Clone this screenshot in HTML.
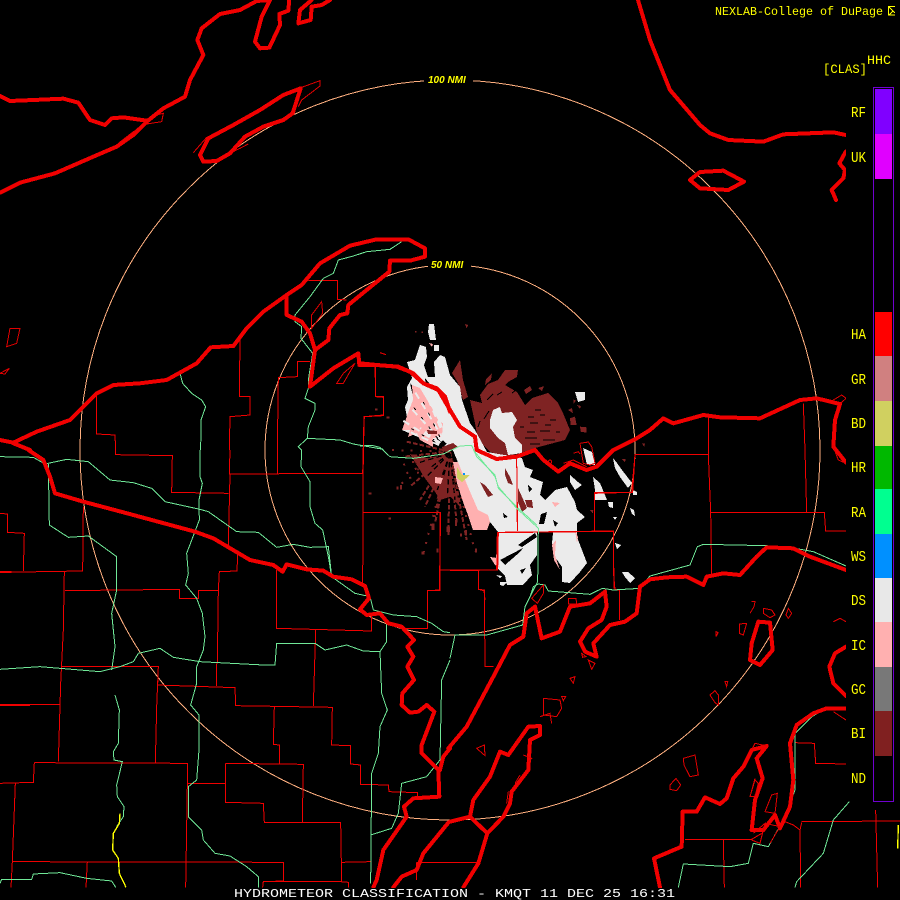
<!DOCTYPE html>
<html><head><meta charset="utf-8"><title>Hydrometeor Classification KMQT</title>
<style>html,body{margin:0;padding:0;background:#000;width:900px;height:900px;overflow:hidden}svg{display:block}
.mono{font-family:"Liberation Mono",monospace;fill:#ff0}
.nmi{font-family:"Liberation Sans",sans-serif;font-weight:bold;font-style:italic;font-size:10px;fill:#ff0}
.t{fill:none;stroke:#f00000;stroke-width:12;stroke-linejoin:round;stroke-linecap:round}
.c{fill:none;stroke:#f00000;stroke-width:3}
.g{fill:none;stroke:#70e898;stroke-width:3}
.i{fill:none;stroke:#e00000;stroke-width:3}
.y{fill:none;stroke:#ff0;stroke-width:4}
</style></head><body>
<svg xmlns="http://www.w3.org/2000/svg" width="900" height="900" viewBox="0 0 900 900" shape-rendering="crispEdges">
<defs><clipPath id="m"><path d="M0 0H846V800H900V888H0Z"/></clipPath></defs>
<rect width="900" height="900" fill="#000"/>

<!-- radar: spokes and clutter -->
<g transform="translate(360 310) scale(.33333)">
 <g fill="none" stroke="#7f2323" stroke-width="6">
  <path stroke-dasharray="14 6" d="M270 425L130 440M270 425L150 530M270 425L180 570M270 425L195 590M270 425L230 590M270 425L225 640M270 425L265 675M270 425L290 640M270 425L320 690M270 425L140 395"/>
  <path stroke-dasharray="6 22" d="M270 425L110 470M270 425L110 530M270 425L345 725M270 425L215 660M270 425L80 420M270 425L120 500M270 425L190 730"/>
  <path stroke-dasharray="4 8" d="M270 425L230 480M270 425L250 530M270 425L280 560M270 425L170 480M270 425L200 520"/>
 </g>
 <path fill="#7f2323" d="M150 432L205 445L255 432L270 460L282 515L300 590L272 560L240 570L225 545L195 505L170 465Z"/>
 <path fill="none" stroke="#000" stroke-width="4" stroke-dasharray="16 10" d="M270 430L170 460M270 430L200 500M270 430L232 540M270 430L262 560M270 430L285 570M270 430L215 470M270 430L250 500M270 430L180 440"/>
 <path fill="#7f2323" d="M315 42L325 45L320 55ZM85 622h8v6h-8zM25 548h9v6h-9zM215 640h8v20h-8zM185 725h8v8h-8zM230 715h6v12h-6zM260 650h10v16h-10zM285 630h6v18h-6zM345 715h6v12h-6zM315 660h6v16h-6zM300 670h6v10h-6zM120 525h6v14h-6zM110 530h6v8h-6zM45 295h8v6h-8zM80 320h8v5h-8zM165 63h4v4h-4zM185 65h4v4h-4zM630 325L645 320L650 345L632 345ZM660 350L680 352L680 368L662 365ZM640 268L648 272L640 282ZM590 295L600 298L595 310ZM690 600L700 600L698 610ZM450 815L462 818L458 825ZM785 447L797 447L795 457ZM845 400L855 400L853 410Z"/>
</g>

<!-- radar: BI echo -->
<path fill="#7f2323" d="M482 403L470 400L475 423L478 440L490 452L508 457L535 448L565 440L570 430L563 413L558 403L548 393L532 398L525 405L517 392L505 385L498 380L488 384L480 395Z"/>
<path fill="#7f2323" d="M498 380L505 370L518 370L517 377L508 382L502 388ZM486 379L492 373L491 380L485 385ZM452 373L460 360L463 380L468 397L463 400L458 383ZM572 418L575 420L573 425ZM568 410l4-2l1 5zM577 405l4 1l-1 3zM524 390l6-4l2 4l-6 4zM538 388l6-2l-2 5z"/>
<path fill="none" stroke="#000" stroke-width="1" d="M528 417h6M540 415h5M530 423h8M545 425h6M527 432h8M540 431h10M525 438h12M543 440h12M530 444h10M545 447h14M535 410h6M520 427h4M484 419l5-8M487 400l6-6M478 427l2-6M497 395l5-3M512 393l4-3M550 420h6M556 432h4"/>

<!-- radar: DS -->
<path fill="#ebebeb" d="M420 345L426 347L427 357L424 365L428 377L435 377L434 362L440 355L445 357L450 375L460 387L462 400L470 423L475 430L487 452L522 458L525 467L533 470L530 477L543 482L540 495L545 500L555 490L567 487L575 502L577 510L585 517L577 523L577 537L582 550L587 563L580 572L570 583L562 582L562 567L555 557L552 543L553 533L552 532L498 532L490 522L488 515L478 510L467 487L457 460L452 448L440 438L425 440L402 430L407 417L405 407L408 400L407 387L412 378L407 362L415 360Z"/>
<path fill="#ebebeb" d="M429 324L434 324L436 340L430 340L428 332ZM434 345h5v6h-5zM493 410L500 407L502 413L512 412L517 420L513 427L515 438L522 445L522 453L508 455L505 443L498 438L490 428L490 420ZM498 532L537 532L537 555L530 565L532 575L523 585L507 585L505 576L497 568L496 558ZM570 475L578 482L582 485L575 490L570 482ZM593 477L600 483L605 495L607 500L595 500L595 490ZM613 458L617 463L622 470L632 483L628 488L620 477L615 468ZM608 502L613 502L613 508L609 507ZM613 517L617 517L615 520ZM630 508l4 2l1 6l-3-2zM615 543L621 545L617 549ZM622 572L628 572L635 578L630 583L625 577ZM583 448L592 452L595 465L587 465ZM500 582L507 582L503 586L500 585ZM496 575L502 576L500 578ZM575 392L585 392L585 400L578 402ZM633 490l4 2v3h-4z"/>

<!-- radar: holes -->
<path fill="#7f2323" d="M480 482L485 485L493 495L488 497L483 488ZM505 468L510 477L513 485L508 483L505 475ZM518 488L527 508L522 512L518 502ZM525 500L532 500L533 508L527 507Z"/>
<path fill="#000" d="M541 514L547 512L544 524L539 524ZM553 520L558 523L555 527ZM503 513L508 517L504 518ZM427 423L442 423L442 435L428 433ZM410 383l5 6l-2 8zM425 378l4 5l-3 4zM417 405l4 3l-3 4zM413 425l6-2l-1 3zM528 485l4 4l-3 3zM535 533L518 545L522 547L537 537ZM500 560L523 548L520 552L505 565ZM520 570l6-2l-4 6z"/>
<!-- radar: IC -->
<path fill="#ffb0b0" d="M412 385L420 388L432 408L438 420L428 430L402 430L408 413L413 400ZM417 410L427 410L433 420L443 423L442 437L433 438L433 447L420 440L417 433L408 437ZM453 462L458 462L468 487L478 510L488 515L490 522L487 530L473 530L468 515L463 502L457 483ZM552 545L556 540L555 555L560 570L554 560ZM575 530L578 537L577 543ZM552 502L560 503L555 507ZM490 557L497 558L498 563L500 568L495 565ZM435 477L443 478L441 484L435 483ZM429 343l4 1l-1 3zM437 424l-4-8l5 3z"/>
<path fill="none" stroke="#ebebeb" stroke-width="2" stroke-dasharray="7 5" d="M450 450L402 420M450 450L408 405M450 450L415 392M450 450L425 392M450 450L410 432M450 450L432 400M450 450L420 428"/>
<path fill="none" stroke="#000" stroke-width="1" stroke-dasharray="3 9" d="M445 448L405 425M445 448L412 405M445 448L420 395"/>
<path fill="#7f2323" d="M442 447L453 443L458 447L443 452ZM427 430l10 1v3h-9z"/>
<path fill="#d0d060" d="M457 467L462 475L470 475L462 482L457 478Z"/>
<path fill="#0090ff" d="M463 473h2v2h-2z"/>

<g clip-path="url(#m)">
<!-- rings -->
<circle cx="450" cy="450" r="370" fill="none" stroke="#ffb080" stroke-width="1"/>
<circle cx="450" cy="450" r="185" fill="none" stroke="#ffb080" stroke-width="1"/>

<!-- top-left -->
<g transform="scale(.33333)">
 <path class="c" d="M720 1020L718 1190L750 1190L750 1245L690 1250L688 1350M290 1185L290 1302L345 1305L347 1350M925 842L1012 842L1012 898L1040 900M930 1085L892 1085L892 1130L835 1133L832 1350M1127 1100L1127 1190L1150 1190L1150 1245L1093 1250L1090 1350"/>
 <path class="g" d="M540 1120L548 1150L575 1180L605 1200L617 1220L603 1260L602 1350M1205 725L1170 748L1100 755L1060 768L1015 780L1000 820L970 835L930 890L885 945L885 965L905 980L903 1015L938 1060L925 1140L925 1165L915 1195L945 1210L945 1230L925 1280L922 1315L895 1340L905 1350M922 1315L1020 1320L1060 1332L1150 1348"/>
 <path class="t" d="M0 578L60 548L165 520L280 470L350 440L400 405L440 365L490 325L555 290L570 240L610 165L592 120L605 85L660 42L720 30L770 3L810 0L785 50L765 125L780 145L808 143L840 75L838 42L865 32L868 -5"/>
 <path class="t" d="M990 0L965 15L935 20L932 60L895 70L900 30L935 0"/>
 <path class="t" d="M0 288L30 303L100 300L190 296L235 308L270 360L315 375L335 355L370 352L440 362"/>
 <path class="t" d="M600 465L625 415L700 375L780 330L850 285L902 265L878 340L850 360L790 380L735 410L690 460L650 483L610 485Z"/>
 <path class="t" d="M0 1320L40 1328L110 1295L210 1260L290 1180L340 1155L420 1150L500 1140L590 1090L632 1042L700 1038L740 985L790 935L860 885L905 855L960 790L1050 737L1130 718L1225 718L1275 745L1275 770L1230 782L1170 782L1168 815L1100 870L1045 915L1042 940L1020 945L988 985L985 1020L945 1050L930 1000L905 965L860 945L860 890"/>
 <path class="t" d="M945 1050L930 1160L1000 1105L1075 1060L1078 1095L1130 1095L1195 1100L1240 1120L1270 1150L1310 1165L1335 1190L1350 1235"/>
 <path class="t" d="M40 1330L90 1350"/>
 <path class="i" d="M580 458L620 412M905 262L960 242L960 258L905 300L895 320M700 455L745 432L720 445M20 1040L30 985L60 985L50 1030ZM0 1120L28 1105L15 1122ZM1010 1150L1030 1120L1065 1090L1050 1115L1030 1150ZM935 945L965 905L968 940L935 985ZM440 372L485 365L490 340L470 345M355 430L400 395L410 390"/>
</g>

<!-- bottom-left -->
<g transform="translate(0 450) scale(.33333)">
 <path class="c" d="M347 0L347 14L517 17L515 127L685 130M690 0L688 72L1090 70M1090 0L1088 405M832 0L832 70M690 72L685 285M713 315L711 363L658 365L655 422L595 422L595 445L538 445L538 418L195 422M250 170L248 363L0 367M193 365L190 540L182 700L175 935M0 190L22 192L22 247L73 250L70 363M0 765L178 763M185 650L475 650L470 770L466 940M475 650L473 705L705 713L707 767L997 772L995 885L1052 887L1052 942L1082 945L1082 1003L1165 1005L1167 1025L1253 1028L1253 1040M650 640L650 708M655 422L652 640M830 360L830 535L1115 543L1115 495M947 540L940 768M823 770L820 883L838 885L838 940M103 938L563 940L557 1312M103 938L100 997L0 1000M46 1000L37 1235L33 1312M37 1235L850 1237L850 1293L790 1295L788 1312M563 1000L677 1000M677 940L910 943L907 1117M677 940L677 1057L790 1060L793 1117L1022 1118L1025 1295L790 1295M1022 1295L1045 1297L1045 1312M1025 1237L1112 1235M262 1235L258 1312M1250 1237L1350 1237M1250 1237L1250 1290M1090 187L1322 187L1318 420L1283 422L1283 535L1200 535M1320 360L1350 360"/>
 <path class="g" d="M0 20L100 22L135 42L200 28L265 35L330 90L400 98L455 115L495 155L600 178L625 185L710 245L775 247L830 292L880 283L930 292L985 290L995 380L1065 430L1110 440L1120 480L1180 495L1250 500L1295 520L1330 545L1350 548M145 42L148 225L205 262L265 258L350 320L350 420L335 490L345 590L335 660M0 658L120 650L300 665L360 650L400 635L415 610L480 595L520 622L600 635L790 645L825 645L830 580L945 580L975 600L1040 585L1090 603L1140 605L1160 575L1160 520M1140 605L1145 730L1162 780L1140 830L1135 910L1115 970L1112 1300M1112 1155L1175 1135L1195 1090L1205 1000L1280 980L1320 930L1325 690L1350 630M600 0L600 80L607 100L597 150L598 210L560 310L565 370L557 405L590 445L607 490L615 560L610 600L590 650L590 700L572 765L597 795L597 900L590 990L565 1010L565 1100L605 1140L610 1170L645 1210L690 1218L740 1250L775 1280L775 1312M905 0L903 50L930 95L930 170L945 220L968 240L985 320L995 380M345 735L358 780L355 880L340 905L342 930L367 935L350 1005L352 1040L372 1070L370 1100L350 1130M0 1300L5 1288L95 1288L100 1272L180 1268L260 1285L335 1293L347 1312"/>
 <path class="y" d="M360 1090L358 1120L340 1150L338 1200L355 1225L358 1270L378 1312"/>
 <path class="t" d="M85 0L130 30L150 80L165 130L250 155L400 195L585 245L640 265L750 330L820 345L848 365L860 343L920 358L970 362L1000 380L1055 388L1095 408L1107 445L1080 478L1100 495L1140 490L1165 520L1205 530L1242 570L1222 590L1240 620L1222 650L1242 690L1207 730L1205 765L1230 788L1255 785L1280 765L1303 785L1265 885L1265 910L1315 960L1318 1040L1240 1045L1212 1070L1220 1100L1150 1200L1130 1290L1120 1312"/>
 <path class="t" d="M1180 1312L1205 1280L1250 1260L1270 1210L1345 1118"/>
 <path class="t" d="M1350 895L1330 920L1320 960"/>
 <path d="M0 366H35M0 765H90" fill="none" stroke="#f00000" stroke-width="5"/>
</g>

<!-- center -->
<g transform="translate(360 310) scale(.33333)">
 <path class="g" d="M0 408L35 406L60 412L90 440L160 445L250 432L300 408L335 406L350 440L405 495L415 535L470 590L530 645"/>
 <path class="c" d="M45 165L47 260L70 262L70 317L12 320L8 490M10 607L240 607L240 780L410 780L412 668L760 664L762 835M470 445L472 660M703 664L703 548L815 547L825 433L870 433M240 780L240 842L203 842L203 870M355 780L355 838L372 842L375 870"/>
 <path class="t" d="M0 160L50 165L110 170L150 185L190 220L235 240L270 300L300 350L345 380L350 420L410 447L470 440L525 420L550 450L595 485L630 460L680 480L710 470L760 420L830 385L870 360"/>
 <path class="i" d="M660 400L685 396L695 410L705 460L690 465L670 460Z M640 430L655 425L660 432M610 460L640 450L680 470M570 450a5 5 0 1 0 .1 0M60 128L78 134"/>
</g>

<!-- east UP coast -->
<g transform="translate(450 300) scale(.33333)">
 <path class="t" d="M600 390L640 355L670 370L760 345L810 352L930 355L1050 300L1100 295L1170 312L1155 360L1150 440L1188 488"/>
 <path class="c" d="M775 345L775 463M1060 310L1065 450"/>
 <path class="i" d="M1150 300L1175 285L1188 295L1170 312M1148 435L1165 480L1188 490"/>
</g>

<!-- right -->
<g transform="translate(450 450) scale(.33333)">
 <path class="c" d="M0 362L143 360L145 247L490 243L490 365L495 418L508 420L508 510M85 362L85 418L103 420L105 650L130 650M200 30L203 243M433 243L433 130L548 127L555 13L775 13L782 187L1123 187L1127 243L1188 243M1065 0L1070 187M782 187L785 370M0 1238L85 1238M705 1168L905 1168L935 1150M820 1170L823 1312M1035 878L1093 880L1097 940L1188 942M1055 1118L1050 1140L1052 1312M1005 1115L1030 1125L1050 1140M1055 1115L1350 1113M1277 1080L1283 1312"/>
 <path class="g" d="M70 0L135 80L145 110L200 175L265 235L263 395L240 440L250 410L265 402L285 405L295 423L420 433L457 415L490 420L570 415L600 378L720 345L742 290L760 283L950 287L1035 295L1090 305L1188 348M240 440L225 470L218 525L110 555L15 555L0 625M1135 772L1085 800L1035 850L1035 1020L1000 1110L955 1190L910 1180L895 1240L840 1250L700 1242L685 1312M1198 1055L1150 1110L1120 1210L1040 1295L1035 1312"/>
 <path class="t" d="M-5 895L50 830L130 680L180 585L220 560L230 490L255 470L275 565L330 545L360 470L420 460L465 425L470 470L455 510L415 535L390 575L405 605L440 620L430 580L480 525L525 515L560 490L570 410L600 388L650 382L710 380L760 405L770 380L820 370L870 375L920 320L950 292L1030 295L1080 320L1188 360"/>
 <path class="t" d="M60 1100L70 1050L120 980L150 905L175 915L235 830L270 828L270 855L240 870L235 960L185 1025L180 1060L160 1100L112 1150L60 1100L0 1115M112 1150L85 1240L40 1312"/>
 <path class="t" d="M630 1312L612 1225L695 1190L698 1085L740 1085L765 1042L810 1062L830 1045L850 985L880 950L905 900L950 888L920 925L938 985L915 1050L905 1140L940 1140L975 1095L990 1135L1020 1070L1030 990L1020 880L1040 825L1090 790L1130 775L1188 775"/>
 <path class="t" d="M925 515L960 518L968 600L930 645L900 630L905 580Z"/>
 <path class="t" d="M1188 590L1155 610L1138 650L1150 700L1188 738"/>
 <path class="i" d="M1015 475L1025 490L1015 505L1008 495ZM940 475L965 480L975 495L960 503L940 490ZM868 522L890 520L880 555L868 550ZM1150 515L1170 505L1188 515M780 735L795 722L805 735L805 765L795 758ZM825 695L833 695L830 710ZM700 925L735 915L745 975L720 980L702 945ZM660 1005L678 985L692 1005L680 1022L660 1018ZM280 745L330 750L335 775L320 800L280 795ZM335 740L347 740L340 752ZM360 685L375 680L370 700ZM415 630L435 640L425 658ZM395 610L408 620L398 622ZM80 895L103 885L105 917ZM965 1035L982 1030L975 1090L945 1085ZM915 990L925 1000L915 1040L900 1040ZM245 445L280 405L280 430L262 460ZM798 545L804 548L798 560ZM355 445L378 445L380 462L355 462ZM905 455L915 455L912 470L900 490M270 800L300 790L305 820M215 850L200 880M175 1025L170 1060M220 915L245 925L235 935M210 975L195 1000M905 900L915 880L950 888M915 985L900 1040M1150 785L1188 810M910 1150L945 1120L930 1180L905 1170M945 1120L990 1130L960 1180"/>
 <path class="y" d="M1345 1125L1343 1195"/>
</g>

<!-- top right -->
<g transform="translate(700 0) scale(.33333)">
 <path class="t" d="M0 375L30 400L85 420L190 425L250 403L400 397L437 405M437 455L418 490L435 510L430 535L395 570L408 600"/>
</g>
<path class="t" transform="scale(.33333)" d="M1914 0L1950 120L2010 270L2100 375"/>
<path class="t" transform="scale(.33333)" d="M2070 540L2100 516L2170 512L2232 545L2185 570L2100 565Z"/>

<!-- ring labels -->
<rect x="424" y="74" width="49" height="12" fill="#000"/>
<rect x="428" y="259" width="43" height="12" fill="#000"/>
</g>

<text class="nmi" x="428" y="83">100 NMI</text>
<text class="nmi" x="431" y="268">50 NMI</text>

<!-- header -->
<text class="mono" x="715" y="15" font-size="12" textLength="168" lengthAdjust="spacingAndGlyphs">NEXLAB-College of DuPage</text>
<path d="M888 6.5H895M888.5 6V15M889 7L893 11L889 15H895M893 11L895 13" fill="none" stroke="#ff0" stroke-width="1"/>
<text class="mono" x="867" y="64" font-size="13" textLength="24" lengthAdjust="spacingAndGlyphs">HHC</text>
<text class="mono" x="823" y="73" font-size="13" textLength="44" lengthAdjust="spacingAndGlyphs">[CLAS]</text>

<!-- colour bar -->
<rect x="873.5" y="87.5" width="20" height="714" fill="#000" stroke="#7000d0" stroke-width="1"/>
<rect x="875" y="89" width="17" height="45" fill="#8000ff"/>
<rect x="875" y="134" width="17" height="45" fill="#e000ff"/>
<rect x="875" y="312" width="17" height="44" fill="#ff0000"/>
<rect x="875" y="356" width="17" height="45" fill="#d08080"/>
<rect x="875" y="401" width="17" height="45" fill="#d0d060"/>
<rect x="875" y="446" width="17" height="43" fill="#00b800"/>
<rect x="875" y="489" width="17" height="45" fill="#00ff90"/>
<rect x="875" y="534" width="17" height="44" fill="#0090ff"/>
<rect x="875" y="578" width="17" height="44" fill="#e8e8e8"/>
<rect x="875" y="622" width="17" height="45" fill="#ffb0b0"/>
<rect x="875" y="667" width="17" height="44" fill="#787878"/>
<rect x="875" y="711" width="17" height="45" fill="#802020"/>

<g font-size="14.5">
 <text class="mono" x="851" y="117" textLength="15" lengthAdjust="spacingAndGlyphs">RF</text>
 <text class="mono" x="851" y="162" textLength="15" lengthAdjust="spacingAndGlyphs">UK</text>
 <text class="mono" x="851" y="339" textLength="15" lengthAdjust="spacingAndGlyphs">HA</text>
 <text class="mono" x="851" y="384" textLength="15" lengthAdjust="spacingAndGlyphs">GR</text>
 <text class="mono" x="851" y="428" textLength="15" lengthAdjust="spacingAndGlyphs">BD</text>
 <text class="mono" x="851" y="472" textLength="15" lengthAdjust="spacingAndGlyphs">HR</text>
 <text class="mono" x="851" y="517" textLength="15" lengthAdjust="spacingAndGlyphs">RA</text>
 <text class="mono" x="851" y="561" textLength="15" lengthAdjust="spacingAndGlyphs">WS</text>
 <text class="mono" x="851" y="605" textLength="15" lengthAdjust="spacingAndGlyphs">DS</text>
 <text class="mono" x="851" y="650" textLength="15" lengthAdjust="spacingAndGlyphs">IC</text>
 <text class="mono" x="851" y="694" textLength="15" lengthAdjust="spacingAndGlyphs">GC</text>
 <text class="mono" x="851" y="738" textLength="15" lengthAdjust="spacingAndGlyphs">BI</text>
 <text class="mono" x="851" y="783" textLength="15" lengthAdjust="spacingAndGlyphs">ND</text>
</g>

<text x="234" y="897" font-family="'Liberation Mono',monospace" font-size="12" fill="#fff" textLength="441" lengthAdjust="spacingAndGlyphs">HYDROMETEOR CLASSIFICATION - KMQT 11 DEC 25 16:31</text>
</svg>
</body></html>
